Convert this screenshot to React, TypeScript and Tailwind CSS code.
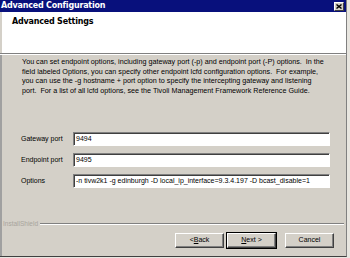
import React from "react";

const sans = { fontFamily: "'Liberation Sans', Arial, sans-serif" };
const bold = { fontFamily: "'DejaVu Sans', sans-serif", letterSpacing: "-0.2px" };

function Field({ label, value }: { label: string; value: string }) {
  return (
    <div className="flex items-center h-[14px]">
      <div className="w-[52px] text-[7px] text-black" style={sans}>{label}</div>
      <div className="w-[257px] h-[14px] bg-white border-t border-l border-t-[#808080] border-l-[#808080] border-r border-b border-r-white border-b-white shadow-[inset_1px_1px_0_#404040] flex items-center pl-[2px] text-[7px] text-black whitespace-nowrap overflow-hidden" style={sans}>
        {value}
      </div>
    </div>
  );
}

function Btn({ children, def }: { children: React.ReactNode; def?: boolean }) {
  return (
    <div className={`w-[51px] h-[17px] flex items-center justify-center text-[7px] text-black bg-[#d4d0c8] border ${def ? "border-black" : "border-transparent"}`} style={sans}>
      <div className="w-full h-full flex items-center justify-center border-t border-l border-t-white border-l-white border-r border-b border-r-[#404040] border-b-[#404040] shadow-[inset_-1px_-1px_0_#808080]">
        {children}
      </div>
    </div>
  );
}

export default function App() {
  return (
    <div className="w-[350px] h-[258px] bg-[#e8e6e0] overflow-hidden">
      <div className="w-[347px] h-[257px] bg-[#d4d0c8] border-r border-b border-r-[#808080] border-b-[#404040] flex flex-col">
        <div className="h-[12px] bg-[#08107c] flex items-center justify-between pl-[1px] pr-[2px]">
          <span className="text-white font-bold text-[8px] leading-none" style={bold}>Advanced Configuration</span>
          <div className="w-[10px] h-[9px] bg-[#d4d0c8] border-t border-l border-t-white border-l-white border-r border-b border-r-[#404040] border-b-[#404040] flex items-center justify-center">
            <svg width="6" height="5" viewBox="0 0 6 5">
              <path d="M0.5 0.5 L5.5 4.5 M5.5 0.5 L0.5 4.5" stroke="#000" strokeWidth="1.4" />
            </svg>
          </div>
        </div>
        <div className="h-[41px] bg-white border-l-[2px] border-l-[#d4d0c8] pl-[10px] pt-[6px]">
          <div className="font-bold text-[8px] leading-none text-black" style={bold}>Advanced Settings</div>
        </div>
        <div className="h-[2px] border-t border-t-[#808080] border-b border-b-white" />
        <div className="flex-1 border-l-[2px] border-l-[#a0a0a0] flex flex-col">
          <p className="h-[40px] pl-[20px] pt-[2px] text-[7.2px] leading-[9.5px] text-black whitespace-nowrap" style={sans}>
            You can set endpoint options, including gateway port (-p) and endpoint port (-P) options.&nbsp; In the<br />
            field labeled Options, you can specify other endpoint lcfd configuration options.&nbsp; For example,<br />
            you can use the -g hostname + port option to specify the intercepting gateway and listening<br />
            port.&nbsp; For a list of all lcfd options, see the Tivoli Management Framework Reference Guide.
          </p>
          <div className="pl-[19px] mt-[37px] flex flex-col gap-[7px]">
            <Field label="Gateway port" value="9494" />
            <Field label="Endpoint port" value="9495" />
            <Field label="Options" value="-n tivw2k1 -g edinburgh -D local_ip_interface=9.3.4.197 -D bcast_disable=1" />
          </div>
          <div className="mt-[31px] flex items-center pl-[1px] pr-[2px]">
            <span className="text-[6.5px] text-[#a8a49c]" style={sans}>InstallShield</span>
            <div className="flex-1 ml-[2px] h-[2px] border-t border-t-[#808080] border-b border-b-white" />
          </div>
          <div className="flex justify-end pr-[11px] mt-[3px]">
            <div className="flex gap-[1px]">
              <Btn>&lt; <u>B</u>ack</Btn>
              <Btn def><u>N</u>ext &gt;</Btn>
            </div>
            <div className="ml-[7px]">
              <Btn>Cancel</Btn>
            </div>
          </div>
        </div>
      </div>
    </div>
  );
}
